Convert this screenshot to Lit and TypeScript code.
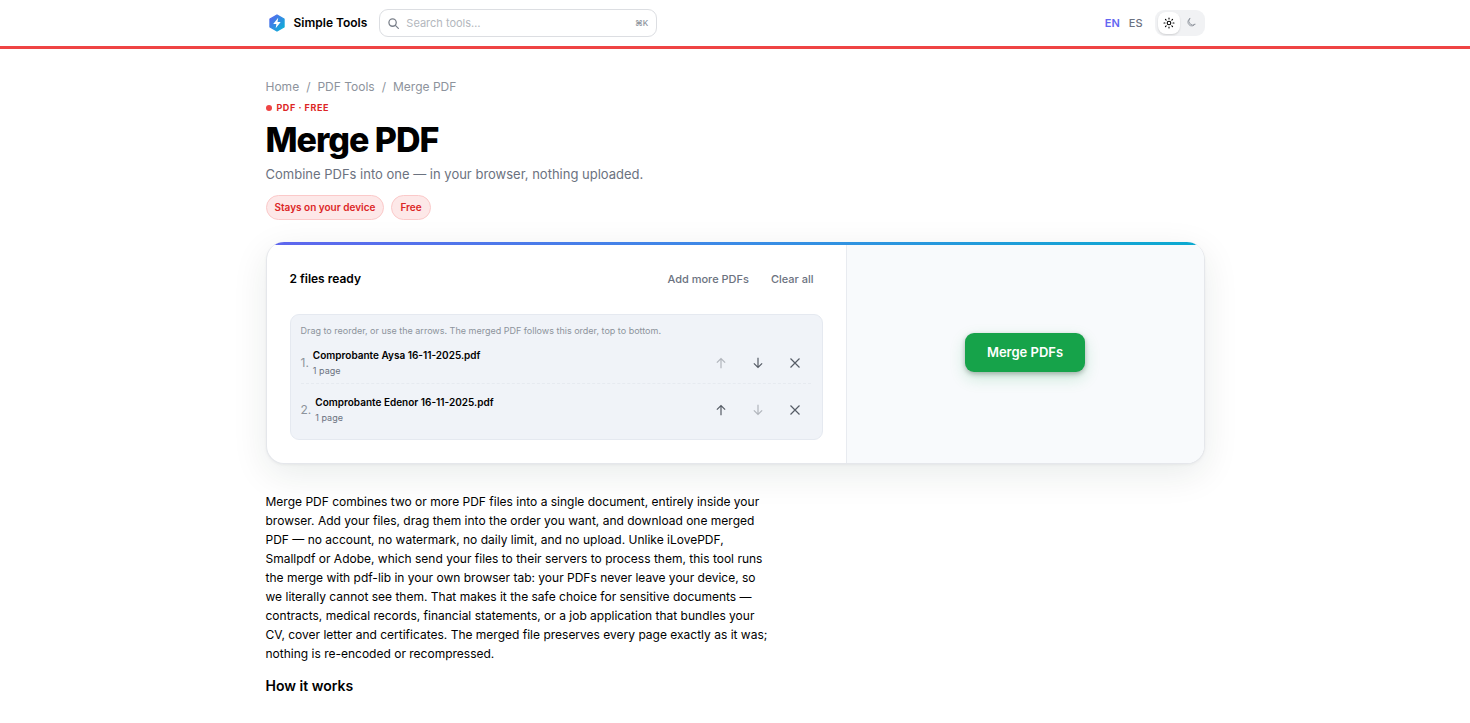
import { LitElement, html, css, svg } from "lit";
import { customElement, state } from "lit/decorators.js";
import { classMap } from "lit/directives/class-map.js";

interface PdfFile {
  name: string;
  pages: number;
}

const arrowUp = svg`<path d="M8 15V2M2.500 7.500 8 2l5.500 5.500" />`;
const arrowDown = svg`<path d="M8 1v13M2.500 8.500 8 14l5.500-5.500" />`;
const cross = svg`<path d="M2 2l12 12M14 2L2 14" />`;

@customElement("file-list")
export class FileList extends LitElement {
  @state() private files: PdfFile[] = [
    { name: "Comprobante Aysa 16-11-2025.pdf", pages: 1 },
    { name: "Comprobante Edenor 16-11-2025.pdf", pages: 1 },
  ];

  static styles = css`
    :host {
      display: block;
    }
    button {
      font: inherit;
      border: 0;
      background: none;
      padding: 0;
      cursor: pointer;
    }
    .head {
      display: flex;
      align-items: center;
      justify-content: space-between;
      height: 24px;
      margin-bottom: 23px;
    }
    .count {
      margin: 0;
      font-size: 12px;
      line-height: 18px;
      font-weight: 600;
      color: #000;
    }
    .actions {
      display: flex;
      gap: 4px;
    }
    .link {
      padding: 4px 9px;
      font-size: 11px;
      line-height: 16px;
      font-weight: 500;
      color: #6b7280;
    }
    .box {
      padding: 9px 11px 3px 10px;
      border: 1px solid #e5e9f0;
      border-radius: 9px;
      background: #f0f3f8;
    }
    .hint {
      margin: 0;
      font-size: 9px;
      line-height: 14px;
      color: #8d939c;
    }
    .rows {
      list-style: none;
      margin: 0;
      padding: 0;
    }
    .row {
      display: flex;
      align-items: center;
      gap: 4px;
      height: 41px;
      padding-top: 4px;
    }
    .row + .row {
      height: 52px;
      padding-top: 0;
      border-top: 1px dashed #e6eaf0;
    }
    .index {
      font-size: 12px;
      line-height: 16px;
      color: #8d939c;
    }
    .info {
      flex: 1;
      min-width: 0;
    }
    .name {
      display: block;
      font-size: 10px;
      line-height: 15px;
      font-weight: 600;
      color: #000;
    }
    .pages {
      display: block;
      font-size: 9px;
      line-height: 15px;
      color: #6b7280;
    }
    .controls {
      display: flex;
      gap: 5px;
    }
    .icon-button {
      display: grid;
      place-items: center;
      width: 32px;
      height: 32px;
      color: #565c66;
    }
    .icon-button:disabled {
      opacity: 0.4;
      cursor: default;
    }
    .icon {
      width: 12px;
      height: 12px;
      fill: none;
      stroke: currentColor;
      stroke-width: 1.6;
    }
  `;

  private move(from: number, to: number) {
    const next = [...this.files];
    [next[from], next[to]] = [next[to], next[from]];
    this.files = next;
  }

  private remove(index: number) {
    this.files = this.files.filter((_, i) => i !== index);
  }

  private iconButton(label: string, glyph: unknown, disabled: boolean, run: () => void) {
    return html`<button class="icon-button" type="button" aria-label=${label} ?disabled=${disabled} @click=${run}>
      <svg class="icon" viewBox="0 0 16 16" aria-hidden="true">${glyph}</svg>
    </button>`;
  }

  render() {
    const last = this.files.length - 1;
    return html`
      <div class="head">
        <h2 class="count">${this.files.length} files ready</h2>
        <div class="actions">
          <button class="link" type="button">Add more PDFs</button>
          <button class="link" type="button" @click=${() => (this.files = [])}>Clear all</button>
        </div>
      </div>
      <div class="box">
        <p class="hint">Drag to reorder, or use the arrows. The merged PDF follows this order, top to bottom.</p>
        <ol class="rows">
          ${this.files.map(
            (file, i) => html`<li class="row" draggable="true">
              <span class="index">${i + 1}.</span>
              <span class="info">
                <span class="name">${file.name}</span>
                <span class="pages">${file.pages} ${file.pages === 1 ? "page" : "pages"}</span>
              </span>
              <span class="controls">
                ${this.iconButton("Move up", arrowUp, i === 0, () => this.move(i, i - 1))}
                ${this.iconButton("Move down", arrowDown, i === last, () => this.move(i, i + 1))}
                ${this.iconButton("Remove", cross, false, () => this.remove(i))}
              </span>
            </li>`
          )}
        </ol>
      </div>
    `;
  }
}

@customElement("site-header")
export class SiteHeader extends LitElement {
  @state() private theme: "light" | "dark" = "light";

  static styles = css`
    :host {
      display: block;
      background: #fff;
      border-bottom: 3px solid #ef4444;
    }
    .bar {
      display: flex;
      align-items: center;
      max-width: 939px;
      height: 46px;
      margin: 0 auto;
    }
    .brand {
      display: flex;
      align-items: center;
      gap: 6px;
      margin-right: 12px;
      color: #000;
      font-size: 12px;
      line-height: 20px;
      font-weight: 600;
      text-decoration: none;
    }
    .logo {
      width: 22px;
      height: 22px;
    }
    .search {
      box-sizing: border-box;
      display: flex;
      align-items: center;
      gap: 7px;
      flex: 0 1 278px;
      height: 28px;
      padding: 0 8px;
      border: 1px solid #dcdee2;
      border-radius: 9px;
    }
    .lens {
      flex: none;
      width: 11px;
      height: 11px;
      fill: none;
      stroke: #7b818b;
      stroke-width: 1.4;
      stroke-linecap: round;
    }
    .field {
      flex: 1;
      min-width: 0;
      padding: 0;
      border: 0;
      outline: 0;
      background: none;
      font: inherit;
      font-size: 11px;
      line-height: 16px;
      color: #000;
    }
    .field::placeholder {
      color: #b3b7bd;
      opacity: 1;
    }
    .key {
      font-family: inherit;
      font-size: 8px;
      line-height: 12px;
      font-weight: 500;
      color: #8d939c;
    }
    .tools {
      display: flex;
      align-items: center;
      gap: 9px;
      margin-left: auto;
      font-size: 11px;
      line-height: 16px;
      font-weight: 500;
    }
    .lang {
      color: #6b7280;
      text-decoration: none;
    }
    .lang.active {
      color: #6366f1;
      font-weight: 600;
    }
    .switch {
      display: flex;
      margin-left: 3px;
      padding: 2px 3px;
      border-radius: 9px;
      background: #f1f2f4;
    }
    .mode {
      display: grid;
      place-items: center;
      width: 22px;
      height: 22px;
      padding: 0;
      border: 0;
      border-radius: 8px;
      background: none;
      color: #8d939c;
      cursor: pointer;
    }
    .mode.on {
      background: #fff;
      color: #000;
      box-shadow: 0 1px 2px rgb(0 0 0 / 0.14);
    }
    .glyph {
      width: 12px;
      height: 12px;
      fill: none;
      stroke: currentColor;
      stroke-width: 2.2;
      stroke-linecap: round;
      stroke-linejoin: round;
    }
  `;

  render() {
    return html`
      <div class="bar">
        <a class="brand" href="#">
          <svg class="logo" viewBox="0 0 22 22" aria-hidden="true">
            <defs>
              <linearGradient id="brand" x1="0" y1="0" x2="1" y2="1">
                <stop offset="0" stop-color="#5b63f0" />
                <stop offset="1" stop-color="#06b6d4" />
              </linearGradient>
            </defs>
            <path
              d="M11 3l7 4v8l-7 4-7-4V7z"
              fill="url(#brand)"
              stroke="url(#brand)"
              stroke-width="1.4"
              stroke-linejoin="round"
            />
            <path d="M12.200 5.800 7.200 12h3.200l-.7 4.200 5-6.200h-3.200z" fill="#fff" />
          </svg>
          Simple Tools
        </a>
        <label class="search">
          <svg class="lens" viewBox="0 0 12 12" aria-hidden="true">
            <circle cx="5" cy="5" r="4" />
            <path d="M8 8l3.300 3.300" />
          </svg>
          <input class="field" type="search" placeholder="Search tools…" aria-label="Search tools" />
          <kbd class="key">⌘K</kbd>
        </label>
        <nav class="tools" aria-label="Preferences">
          <a class="lang active" href="#en">EN</a>
          <a class="lang" href="#es">ES</a>
          <span class="switch">
            <button
              type="button"
              aria-label="Light theme"
              class=${classMap({ mode: true, on: this.theme === "light" })}
              @click=${() => (this.theme = "light")}
            >
              <svg class="glyph" viewBox="0 0 24 24" aria-hidden="true">
                <circle cx="12" cy="12" r="3.6" />
                <path
                  d="M12 2v2M12 20v2M2 12h2M20 12h2M4.900 4.900l1.400 1.400M17.700 17.700l1.400 1.400M4.900 19.100l1.400-1.400M17.700 6.300l1.400-1.400"
                />
              </svg>
            </button>
            <button
              type="button"
              aria-label="Dark theme"
              class=${classMap({ mode: true, on: this.theme === "dark" })}
              @click=${() => (this.theme = "dark")}
            >
              <svg class="glyph" viewBox="0 0 24 24" aria-hidden="true">
                <path d="M9.500 3a8 8 0 1 0 11 11 7.800 7.800 0 0 1-11-11z" stroke-width="1.8" />
              </svg>
            </button>
          </span>
        </nav>
      </div>
    `;
  }
}

@customElement("app-root")
export class AppRoot extends LitElement {
  static styles = css`
    :host {
      display: block;
      font-family: Inter, "Liberation Sans", sans-serif;
      color: #000;
      background: #fff;
    }
    .page {
      max-width: 939px;
      margin: 0 auto;
      padding: 28px 0 24px;
    }
    .crumbs {
      display: flex;
      gap: 7px;
      font-size: 12px;
      line-height: 20px;
      color: #8d939c;
    }
    .crumb {
      color: inherit;
      text-decoration: none;
    }
    .eyebrow {
      display: flex;
      align-items: center;
      gap: 5px;
      margin: 4px 0 0;
      font-size: 9px;
      line-height: 14px;
      font-weight: 700;
      letter-spacing: 0.06em;
      text-transform: uppercase;
      color: #dc2626;
    }
    .dot {
      width: 6px;
      height: 6px;
      border-radius: 50%;
      background: #ef4444;
    }
    .title {
      margin: 5px 0 0;
      font-size: 34px;
      line-height: 40px;
      font-weight: 800;
      letter-spacing: -0.03em;
    }
    .lead {
      margin: 4px 0 0;
      font-size: 13px;
      line-height: 20px;
      color: #6b7280;
    }
    .badges {
      display: flex;
      gap: 7px;
      margin: 11px 0 22px;
      padding: 0;
      list-style: none;
    }
    .badge {
      padding: 4px 8px;
      border: 1px solid #fbc9c9;
      border-radius: 13px;
      background: #fde8e8;
      font-size: 10px;
      line-height: 15px;
      font-weight: 600;
      color: #dc2626;
    }
    .card {
      display: grid;
      grid-template-columns: 1.618fr 1fr;
      overflow: hidden;
      border: 1px solid #e5e7eb;
      border-top: 0;
      border-radius: 18px;
      background: linear-gradient(90deg, #5f66ee, #3b8be6 50%, #0aaad0) top / 100% 3px no-repeat #fff;
      box-shadow: 0 1px 3px rgb(15 23 42 / 0.05), 0 10px 36px rgb(15 40 30 / 0.09);
    }
    .files {
      padding: 25px 23px 23px;
    }
    .side {
      display: grid;
      place-items: center;
      margin-top: 3px;
      padding-bottom: 4px;
      border-left: 1px solid #e8ebf0;
      background: #f8fafc;
    }
    .merge {
      height: 39px;
      padding: 0 22px;
      border: 0;
      border-radius: 9px;
      background: #16a34a;
      box-shadow: 0 2px 5px rgb(0 0 0 / 0.26), 0 6px 16px rgb(22 163 74 / 0.2);
      font: inherit;
      font-size: 13px;
      line-height: 20px;
      font-weight: 600;
      color: #fff;
      cursor: pointer;
    }
    .copy {
      max-width: 506px;
      margin: 28px 0 0;
      font-size: 12px;
      line-height: 19px;
    }
    .subhead {
      margin: 13px 0 0;
      font-size: 14px;
      line-height: 20px;
      font-weight: 600;
    }
  `;

  render() {
    return html`
      <site-header></site-header>
      <main class="page">
        <nav class="crumbs" aria-label="Breadcrumb">
          <a class="crumb" href="#">Home</a>
          <span>/</span>
          <a class="crumb" href="#pdf">PDF Tools</a>
          <span>/</span>
          <span>Merge PDF</span>
        </nav>
        <p class="eyebrow"><span class="dot"></span>PDF · Free</p>
        <h1 class="title">Merge PDF</h1>
        <p class="lead">Combine PDFs into one — in your browser, nothing uploaded.</p>
        <ul class="badges">
          <li class="badge">Stays on your device</li>
          <li class="badge">Free</li>
        </ul>
        <section class="card" aria-label="Merge PDF files">
          <file-list class="files"></file-list>
          <div class="side"><button class="merge" type="button">Merge PDFs</button></div>
        </section>
        <p class="copy">
          Merge PDF combines two or more PDF files into a single document, entirely inside your browser. Add your
          files, drag them into the order you want, and download one merged PDF — no account, no watermark, no daily
          limit, and no upload. Unlike iLovePDF, Smallpdf or Adobe, which send your files to their servers to process
          them, this tool runs the merge with pdf-lib in your own browser tab: your PDFs never leave your device, so
          we literally cannot see them. That makes it the safe choice for sensitive documents — contracts, medical
          records, financial statements, or a job application that bundles your CV, cover letter and certificates. The
          merged file preserves every page exactly as it was; nothing is re-encoded or recompressed.
        </p>
        <h2 class="subhead">How it works</h2>
      </main>
    `;
  }
}
